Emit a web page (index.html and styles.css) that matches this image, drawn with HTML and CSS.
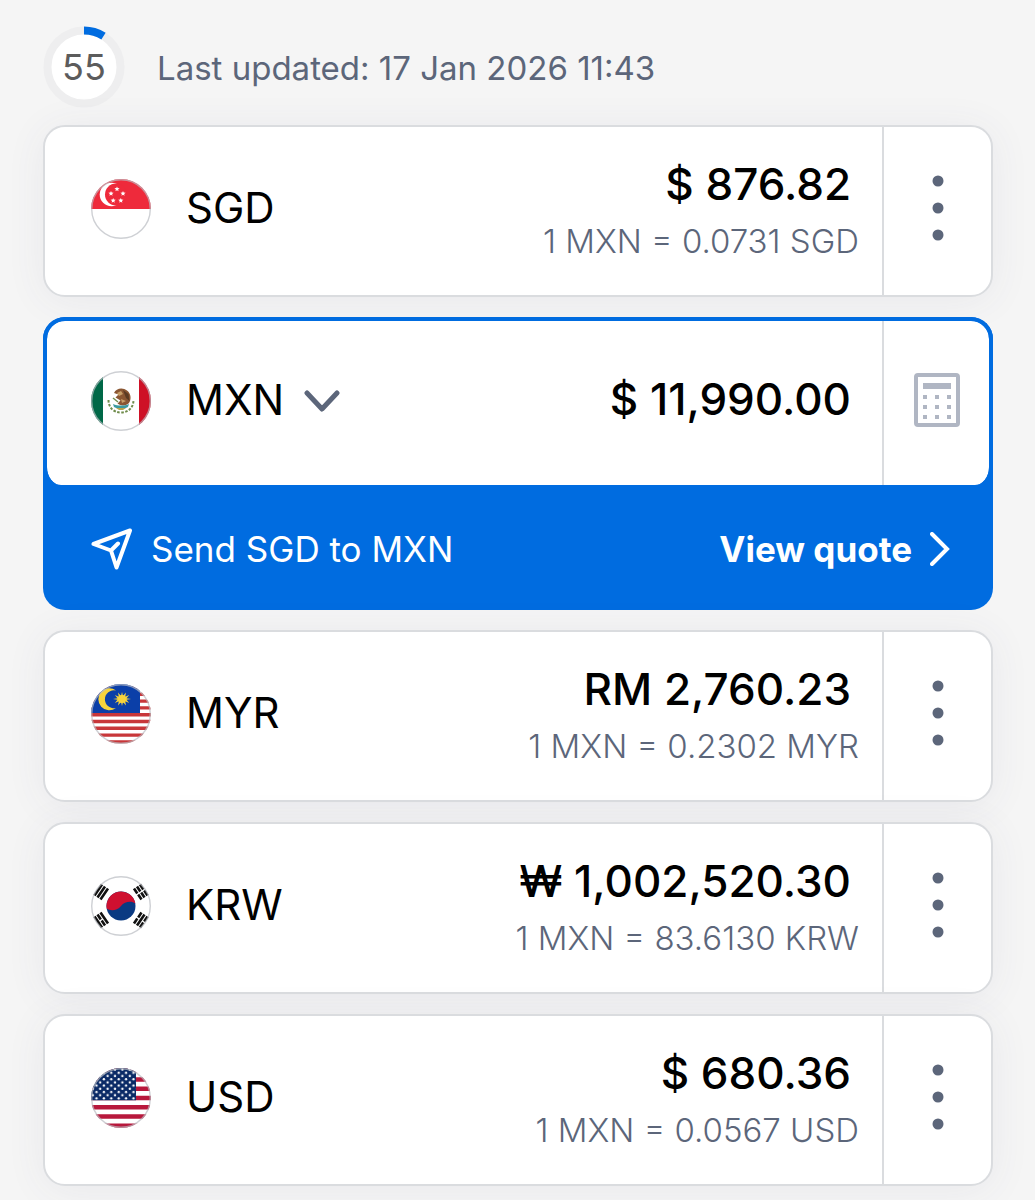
FILE: index.html
```html
<!DOCTYPE html>
<html lang="en">
  <head>
    <meta charset="UTF-8" />
    <meta name="viewport" content="width=device-width, initial-scale=1" />
    <title>Currency Converter</title>
    <link rel="stylesheet" href="styles.css" />
  </head>
  <body>
    <header class="status">
      <div class="timer">
        <svg class="timer-ring" viewBox="0 0 82 82" aria-hidden="true">
          <circle cx="41" cy="41" r="36.500" fill="#fff" stroke="#eeeeef" stroke-width="8" />
          <path d="M41 4.500A36.500 36.500 0 0 1 60.500 10.200" fill="none" stroke="#006ce0" stroke-width="8" />
        </svg>
        <span class="timer-count">55</span>
      </div>
      <p class="updated">Last updated: 17 Jan 2026 11:43</p>
    </header>

    <main class="list">
      <section class="card">
        <div class="currency">
          <svg class="flag" viewBox="0 0 60 60" aria-hidden="true">
            <defs>
              <clipPath id="round"><circle cx="30" cy="30" r="30" /></clipPath>
              <path id="star" d="M0-2.600L.7-.9 2.600-.8 1.100.400 1.600 2.200 0 1.200-1.600 2.200-1.100.400-2.600-.8-.7-.9Z" />
            </defs>
            <g clip-path="url(#round)">
              <path fill="#fff" d="M0 0h60v60H0z" />
              <path fill="#ee2a3b" d="M0 0h60v30H0z" />
              <circle cx="20.500" cy="15.500" r="11.800" fill="#fff" />
              <circle cx="25" cy="15.500" r="11" fill="#ee2a3b" />
              <g fill="#fff">
                <use href="#star" x="26" y="10" />
                <use href="#star" x="32" y="14.500" />
                <use href="#star" x="29.800" y="21.500" />
                <use href="#star" x="22.200" y="21.500" />
                <use href="#star" x="20" y="14.500" />
              </g>
            </g>
            <circle class="flag-edge" cx="30" cy="30" r="29.300" />
          </svg>
          <span class="code">SGD</span>
        </div>
        <div class="value">
          <span class="amount">$ 876.82</span>
          <span class="rate">1 MXN = 0.0731 SGD</span>
        </div>
        <button class="action" type="button" aria-label="SGD options">
          <svg class="dots" viewBox="0 0 12 66"><circle cx="6" cy="6" r="5.500" /><circle cx="6" cy="33" r="5.500" /><circle cx="6" cy="60" r="5.500" /></svg>
        </button>
      </section>

      <section class="selected">
        <div class="card card-active">
          <div class="currency">
            <svg class="flag" viewBox="0 0 60 60" aria-hidden="true">
              <g clip-path="url(#round)">
                <path fill="#fff" d="M0 0h60v60H0z" />
                <path fill="#006847" d="M0 0h12v60H0z" />
                <path fill="#ce1126" d="M48 0h12v60H48z" />
              </g>
              <path d="M17.500 29c0 7.500 5 12.500 12.500 12.500S42.500 36.500 42.500 29" fill="none" stroke="#6f8c4b" stroke-width="2" stroke-dasharray="2.500 1.500" />
              <path fill="#8a5632" d="M23 22c2-5 9-6 13-2.500 4.500 3 4.500 10 1.500 13-3 2.500-8 2.500-11 0l3-3-5-3 3-3z" />
              <path fill="#c8a06a" d="M26 22l4-2 2 3-4 2zM30 28l5 2-4 2z" />
              <path fill="#5b3a22" d="M32 19l5.500 4 1 7-3.500-3z" />
              <path d="M22 27l5 4" stroke="#6f8c4b" stroke-width="1.500" />
              <path fill="#3c9aa0" d="M22 33c5 2 11 2 16 0l-1 3c-4 2-10 2-14 0z" />
              <path fill="#b9a24a" d="M25 37h10l-3 2h-4z" />
              <circle class="flag-edge" cx="30" cy="30" r="29.300" />
            </svg>
            <div class="picker">
              <select class="code code-select" aria-label="Currency">
                <option>MXN</option>
                <option>SGD</option>
                <option>MYR</option>
                <option>KRW</option>
                <option>USD</option>
              </select>
              <svg class="chevron" viewBox="0 0 36 22" aria-hidden="true"><path d="M3 3l15 16L33 3" /></svg>
            </div>
          </div>
          <div class="value">
            <input class="amount amount-input" type="text" inputmode="decimal" value="$ 11,990.00" aria-label="Amount" />
          </div>
          <button class="action" type="button" aria-label="Calculator">
            <svg class="calculator" viewBox="0 0 48 56">
              <rect x="3" y="3" width="42" height="50" rx="2" fill="none" stroke="#b0b6c3" stroke-width="4" />
              <path fill="#b0b6c3" d="M10 11h28v6H10zM10 23h4v4h-4zM22 23h4v4h-4zM34 23h4v4h-4zM10 33h4v4h-4zM22 33h4v4h-4zM34 33h4v4h-4zM10 43h4v4h-4zM22 43h4v4h-4zM34 43h4v4h-4z" />
            </svg>
          </button>
        </div>
        <a class="quote" href="#quote">
          <svg class="send" viewBox="0 0 42 42" aria-hidden="true"><path d="M2.500 16L39 2.500 25.500 39.500 20 22.500ZM20 22.500L27 15.500" /></svg>
          <span class="quote-text">Send SGD to MXN</span>
          <span class="quote-link">View quote</span>
          <svg class="next" viewBox="0 0 20 34" aria-hidden="true"><path d="M2 2l15 15L2 32" /></svg>
        </a>
      </section>

      <section class="card">
        <div class="currency">
          <svg class="flag" viewBox="0 0 60 60" aria-hidden="true">
            <g clip-path="url(#round)">
              <path fill="#fff" d="M0 0h60v60H0z" />
              <path stroke="#c8373a" stroke-width="3.400" d="M0 3.500h60M0 10.300h60M0 17.100h60M0 23.900h60M0 30.700h60M0 37.500h60M0 44.300h60M0 51.100h60M0 57.900h60" />
              <path fill="#0b3fa8" d="M0 0h49v29H0z" />
              <path fill="#f7d33c" d="M25 6.500a11 11 0 1 0 0 17.500a9 9 0 1 1 0-17.500z" />
              <path fill="#f7d33c" d="M31 8l1 4 3-3.500-.8 4.200 4-1.800-2.700 3.300 4.500.8-4.500.8 2.700 3.300-4-1.800.8 4.200-3-3.500-1 4-1-4-3 3.500.8-4.200-4 1.800 2.700-3.300-4.500-.8 4.500-.8-2.700-3.300 4 1.800-.8-4.200 3 3.500z" />
              <circle cx="31" cy="15" r="4" fill="#f7d33c" />
            </g>
            <circle class="flag-edge" cx="30" cy="30" r="29.300" />
          </svg>
          <span class="code">MYR</span>
        </div>
        <div class="value">
          <span class="amount">RM 2,760.23</span>
          <span class="rate">1 MXN = 0.2302 MYR</span>
        </div>
        <button class="action" type="button" aria-label="MYR options">
          <svg class="dots" viewBox="0 0 12 66"><circle cx="6" cy="6" r="5.500" /><circle cx="6" cy="33" r="5.500" /><circle cx="6" cy="60" r="5.500" /></svg>
        </button>
      </section>

      <section class="card">
        <div class="currency">
          <svg class="flag" viewBox="0 0 60 60" aria-hidden="true">
            <circle cx="30" cy="30" r="30" fill="#fff" />
            <circle cx="30" cy="30" r="14.500" fill="#0a3a82" />
            <path fill="#cf1030" d="M15.700 32.500A14.500 14.500 0 1 1 44.300 27.500C41 25 34 25 30 30S19 35 15.700 32.500Z" />
            <g stroke="#111" stroke-width="2.600">
              <path d="M3.500 19.500L11 8.500M6.500 21.500L14 10.500M9.500 23.500L17 12.500" />
              <path d="M49 8.500l3.300 4.900M53.200 14.600l3.300 4.900M46 10.500l3.300 4.900M50.200 16.600l3.300 4.900M43 12.500l3.300 4.900M47.200 18.600l3.300 4.900" />
              <path d="M3.500 40.500l7.500 11M6.500 38.500l3.300 4.900M10.700 44.600l3.300 4.900M9.500 36.500l7.500 11" />
              <path d="M56.500 40.500l-3.300 4.900M52.300 46.600L49 51.500M53.500 38.500L46 49.500M50.500 36.500l-3.300 4.900M46.300 42.600L43 47.500" />
            </g>
            <circle class="flag-edge" cx="30" cy="30" r="29.300" />
          </svg>
          <span class="code">KRW</span>
        </div>
        <div class="value">
          <span class="amount">₩ 1,002,520.30</span>
          <span class="rate">1 MXN = 83.6130 KRW</span>
        </div>
        <button class="action" type="button" aria-label="KRW options">
          <svg class="dots" viewBox="0 0 12 66"><circle cx="6" cy="6" r="5.500" /><circle cx="6" cy="33" r="5.500" /><circle cx="6" cy="60" r="5.500" /></svg>
        </button>
      </section>

      <section class="card">
        <div class="currency">
          <svg class="flag" viewBox="0 0 60 60" aria-hidden="true">
            <defs>
              <pattern id="stars" width="7.400" height="6.400" patternUnits="userSpaceOnUse">
                <g fill="#fff"><circle cx="1.800" cy="1.600" r="1.200" /><circle cx="5.500" cy="4.800" r="1.200" /></g>
              </pattern>
            </defs>
            <g clip-path="url(#round)">
              <path fill="#fff" d="M0 0h60v60H0z" />
              <path stroke="#b8183c" stroke-width="4.600" d="M0 2.300h60M0 11.500h60M0 20.800h60M0 30h60M0 39.200h60M0 48.500h60M0 57.700h60" />
              <path fill="#0a2a66" d="M0 0h45v32.300H0z" />
              <path fill="url(#stars)" d="M0 0h44.500v32H0z" />
            </g>
            <circle class="flag-edge" cx="30" cy="30" r="29.300" />
          </svg>
          <span class="code">USD</span>
        </div>
        <div class="value">
          <span class="amount">$ 680.36</span>
          <span class="rate">1 MXN = 0.0567 USD</span>
        </div>
        <button class="action" type="button" aria-label="USD options">
          <svg class="dots" viewBox="0 0 12 66"><circle cx="6" cy="6" r="5.500" /><circle cx="6" cy="33" r="5.500" /><circle cx="6" cy="60" r="5.500" /></svg>
        </button>
      </section>
    </main>
  </body>
</html>
```

FILE: styles.css
```css
* {
  margin: 0;
  padding: 0;
  box-sizing: border-box;
}
body {
  background-color: #f5f5f5;
  padding: 26px 42px 14px 43px;
  font-family: "Inter", sans-serif;
  color: #000;
}
button,
select,
input {
  border: none;
  background: none;
  font: inherit;
  color: inherit;
}

/* countdown and timestamp */
.status {
  display: flex;
  align-items: center;
  gap: 32px;
  margin-bottom: 17px;
}
.timer {
  display: grid;
  place-items: center;
}
.timer-ring,
.timer-count {
  grid-area: 1 / 1;
}
.timer-ring {
  width: 82px;
  height: 82px;
}
.timer-count {
  font-size: 36px;
  line-height: 44px;
  color: #5c5c5c;
}
.updated {
  padding-top: 2px;
  font-size: 33px;
  line-height: 40px;
  color: #5c667a;
}

/* currency rows */
.list {
  display: flex;
  flex-direction: column;
  gap: 20px;
}
.card {
  display: flex;
  align-items: stretch;
  height: 172px;
  border: 2px solid #dadcdf;
  border-radius: 22px;
  background-color: #fff;
  box-shadow: 0 4px 40px rgba(70, 70, 110, 0.07);
}
.currency {
  display: flex;
  align-items: center;
  gap: 35px;
  padding: 0 0 4px 46px;
}
.flag {
  width: 60px;
  height: 60px;
}
.flag-edge {
  fill: none;
  stroke: #b9bcc2;
  stroke-opacity: 0.7;
  stroke-width: 1.4;
}
.code {
  padding-bottom: 3px;
  font-size: 42px;
  line-height: 50px;
}
.value {
  flex: 1;
  min-width: 0;
  display: flex;
  flex-direction: column;
  justify-content: center;
  align-items: flex-end;
  gap: 12px;
  padding: 0 23px 2px 16px;
}
.amount {
  padding-right: 8px;
  font-size: 44px;
  line-height: 50px;
  font-weight: 500;
}
.rate {
  font-size: 33px;
  line-height: 40px;
  font-weight: 300;
  color: #5c667a;
}
.action {
  flex: none;
  width: 109px;
  padding-bottom: 6px;
  border-left: 2px solid #dadcdf;
  cursor: pointer;
}
.dots {
  display: block;
  width: 12px;
  height: 66px;
  margin: auto;
  fill: #5c667a;
}

/* selected currency */
.selected {
  border-radius: 22px;
  background-color: #006ce0;
}
.card-active {
  height: 168px;
  border: 4px solid #006ce0;
  border-bottom: none;
  border-radius: 22px 22px 18px 18px;
  background-clip: padding-box;
  box-shadow: none;
}
.card-active .currency {
  padding-left: 44px;
}
.card-active .value {
  padding-bottom: 8px;
}
.card-active .action {
  width: 107px;
  padding-bottom: 6px;
}
.picker {
  display: flex;
  align-items: center;
  gap: 20px;
}
.code-select {
  appearance: none;
  field-sizing: content;
  cursor: pointer;
}
.chevron {
  width: 36px;
  height: 22px;
  fill: none;
  stroke: #5c667a;
  stroke-width: 5;
  stroke-linecap: round;
  stroke-linejoin: round;
}
.amount-input {
  width: 100%;
  text-align: right;
  outline: none;
}
.calculator {
  display: block;
  width: 48px;
  height: 56px;
  margin: auto;
}
.quote {
  display: flex;
  align-items: center;
  height: 125px;
  padding: 3px 43px 0 48px;
  color: #fff;
  font-size: 35px;
  line-height: 44px;
  text-decoration: none;
}
.send {
  width: 42px;
  height: 42px;
  margin-right: 18px;
  fill: none;
  stroke: #fff;
  stroke-width: 4;
  stroke-linejoin: round;
  stroke-linecap: round;
}
.quote-link {
  margin-left: auto;
  font-weight: 700;
}
.next {
  width: 20px;
  height: 34px;
  margin-left: 18px;
  fill: none;
  stroke: #fff;
  stroke-width: 4;
  stroke-linecap: round;
}
```
